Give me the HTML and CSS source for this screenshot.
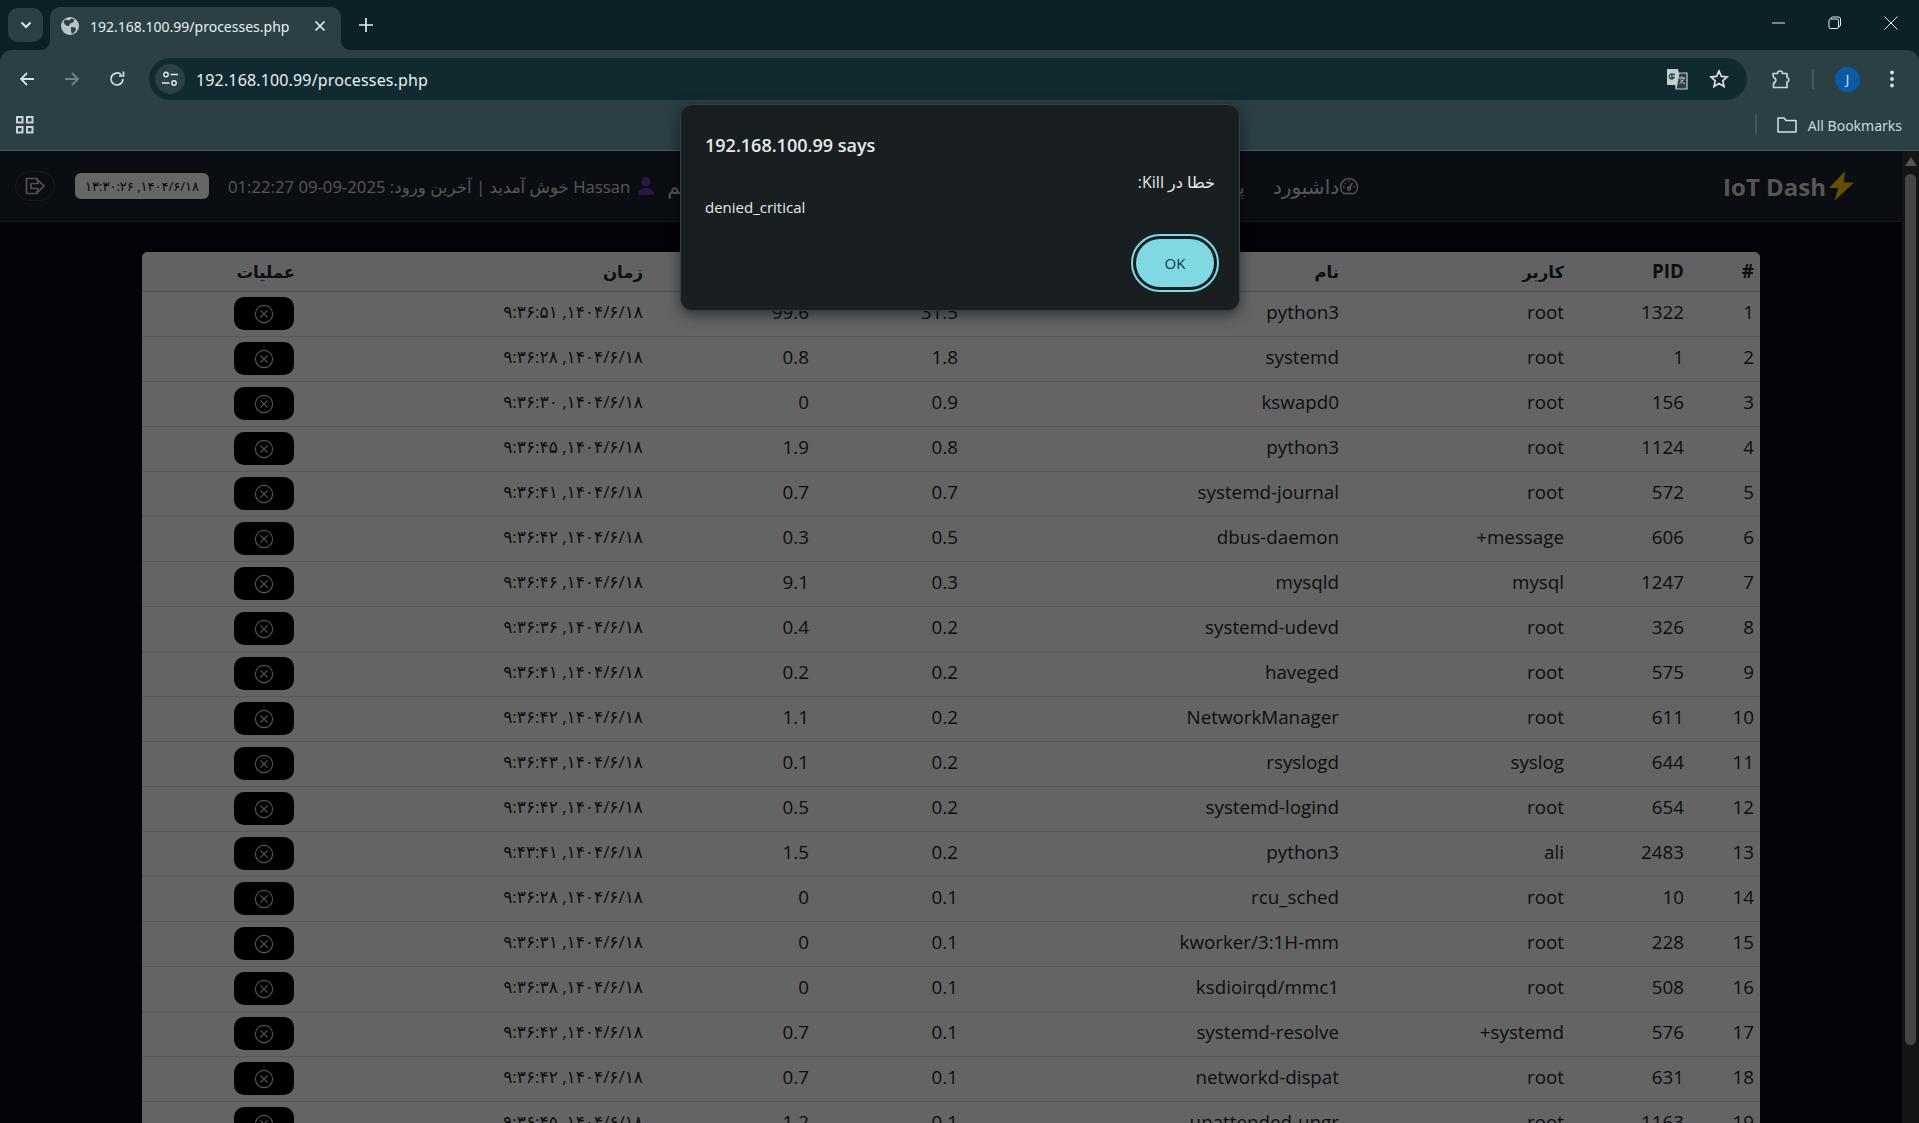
FILE: index.html
```html
<!DOCTYPE html>
<html lang="fa">
<head>
    <meta charset="UTF-8">
    <title>192.168.100.99/processes.php</title>
    <link rel="stylesheet" href="styles.css">
</head>
<body>
    <svg class="defs" width="0" height="0">
        <symbol id="kill" viewBox="0 0 20 20">
            <circle cx="10" cy="10" r="8.6" fill="none" stroke="currentColor" stroke-width="1.1"/>
            <path d="M6.4 6.4l7.2 7.2M13.6 6.4l-7.2 7.2" fill="none" stroke="currentColor" stroke-width="1.2"/>
        </symbol>
    </svg>

    <!-- browser window -->
    <header class="browser">
        <div class="tabstrip">
            <button class="tab-search">
                <svg width="12" height="8" viewBox="0 0 12 8"><path d="M1.5 1.5L6 6l4.500-4.500" fill="none" stroke="#dfe8ea" stroke-width="2"/></svg>
            </button>
            <div class="tab">
                <svg class="globe" width="18" height="18" viewBox="0 0 18 18">
                    <circle cx="9" cy="9" r="9" fill="#b9c6c9"/>
                    <path d="M4 2.500l4 1 2.500-2 3 1-1.500 3-3 1-1 2.500-3-.5-2.500-3zM10 10l4.500.5.500 2.500-3 3.500-1.500-.5-.5-3z" fill="#2a4045"/>
                </svg>
                <span class="tab-title">192.168.100.99/processes.php</span>
                <svg class="tab-close" width="12" height="12" viewBox="0 0 12 12"><path d="M1.500 1.500l9 9M10.500 1.500l-9 9" stroke="#e6eeef" stroke-width="1.700"/></svg>
            </div>
            <svg class="new-tab" width="14" height="14" viewBox="0 0 14 14"><path d="M7 0v14M0 7h14" stroke="#e6eeef" stroke-width="1.700"/></svg>
            <div class="window-controls">
                <svg width="14" height="14" viewBox="0 0 14 14"><path d="M0 7h13" stroke="#e6eeef" stroke-width="1"/></svg>
                <svg width="14" height="14" viewBox="0 0 14 14"><path d="M3 3V2.500A1.500 1.500 0 0 1 4.500 1h6A2 2 0 0 1 12.500 3v6a1.500 1.500 0 0 1-1.500 1.500H11" fill="none" stroke="#e6eeef"/><rect x="1" y="3" width="9.500" height="9.500" rx="1.500" fill="none" stroke="#e6eeef"/></svg>
                <svg width="14" height="14" viewBox="0 0 14 14"><path d="M.5.500l13 13M13.500.500l-13 13" stroke="#e6eeef" stroke-width="1"/></svg>
            </div>
        </div>
        <div class="toolbar">
            <svg class="tool" width="18" height="18" viewBox="0 0 18 18"><path d="M16 9H3M9 3L3 9l6 6" fill="none" stroke="#d5e0e3" stroke-width="1.800"/></svg>
            <svg class="tool" width="18" height="18" viewBox="0 0 18 18"><path d="M2 9h13M9 3l6 6-6 6" fill="none" stroke="#6f8589" stroke-width="1.800"/></svg>
            <svg class="tool" width="18" height="18" viewBox="0 0 18 18"><path d="M15 9a6 6 0 1 1-1.800-4.300M15.500 1.500v4.500H11" fill="none" stroke="#d5e0e3" stroke-width="1.700"/></svg>
            <div class="omnibox">
                <span class="site-chip">
                    <svg width="16" height="16" viewBox="0 0 16 16"><circle cx="4" cy="3.500" r="2.200" fill="none" stroke="#e2ebed" stroke-width="1.400"/><path d="M8.500 3.500H16M0 12h7.500" stroke="#e2ebed" stroke-width="1.400"/><circle cx="12" cy="12" r="2.200" fill="none" stroke="#e2ebed" stroke-width="1.400"/></svg>
                </span>
                <span class="url">192.168.100.99/processes.php</span>
                <svg class="translate" width="22" height="22" viewBox="0 0 22 22">
                    <path d="M1 1h11l1 4h8v16H10l-1-4H1z" fill="#c3ced1"/>
                    <path d="M13 5h8v16H10z" fill="#2a4045" stroke="#c3ced1" stroke-width="1.200"/>
                    <path d="M9 6.500H5.800v3H8a2.500 2.500 0 1 1-.7-3" fill="none" stroke="#2a4045" stroke-width="1.300"/>
                    <path d="M13 10h6M16 8.500V10M18 10c-.7 2.500-2.500 4.500-4.500 5.500M14.500 11.500c1 2 2.500 3.500 4.500 4.500" fill="none" stroke="#c3ced1" stroke-width="1"/>
                </svg>
                <svg class="star" width="20" height="20" viewBox="0 0 20 20"><path d="M10 2l2.400 5.400 5.600.6-4.200 3.800 1.200 5.700-5-2.900-5 2.900 1.200-5.700L2 8l5.600-.6z" fill="none" stroke="#d5e0e3" stroke-width="1.700"/></svg>
            </div>
            <svg class="extension" width="20" height="20" viewBox="0 0 20 20"><path d="M2 4.500h4.500a2.500 2.500 0 0 1 5 0H16v4a2.300 2.300 0 0 1 0 4.500V18.500H2.500v-4.500a2.800 2.800 0 0 0 0-5.500z" fill="none" stroke="#c9d6d9" stroke-width="1.700" stroke-linejoin="round"/></svg>
            <span class="tool-divider"></span>
            <span class="avatar">J</span>
            <svg class="menu-dots" width="6" height="18" viewBox="0 0 6 18"><circle cx="3" cy="2.500" r="1.900" fill="#d5e0e3"/><circle cx="3" cy="9" r="1.900" fill="#d5e0e3"/><circle cx="3" cy="15.500" r="1.900" fill="#d5e0e3"/></svg>
        </div>
        <div class="bookmarks">
            <svg class="apps" width="18" height="18" viewBox="0 0 18 18"><g fill="none" stroke="#c6d2d5" stroke-width="2"><rect x="1" y="1" width="5.500" height="5.500"/><rect x="11" y="1" width="5.500" height="5.500"/><rect x="1" y="11" width="5.500" height="5.500"/><rect x="11" y="11" width="5.500" height="5.500"/></g></svg>
            <span class="tool-divider"></span>
            <svg class="folder" width="20" height="16" viewBox="0 0 20 16"><path d="M1 1h6l2 2.500h10V15H1z" fill="none" stroke="#d5e0e3" stroke-width="1.500" stroke-linejoin="round"/></svg>
            <span class="all-bookmarks">All Bookmarks</span>
        </div>
    </header>

    <div class="page">
        <div class="viewport" dir="rtl">
            <nav class="nav">
                <div class="logo">
                    <svg width="25" height="30" viewBox="0 0 23 30" preserveAspectRatio="none"><path d="M15 0L0 17h8.500L5 30 23 11.500h-9.500z" fill="#ffc107"/></svg>
                    <span>IoT Dash</span>
                </div>
                <div class="nav-links">
                    <a class="nav-link">
                        <svg width="20" height="20" viewBox="0 0 20 20"><g fill="none" stroke="currentColor" stroke-width="1.400"><path d="M4.500 17.500a8.500 8.500 0 1 1 11 0z"/><path d="M10 12l3.500-5"/><circle cx="10" cy="12.500" r="1.500"/><path d="M4 11h1.500M14.500 11H16M6 7l1 1M10 4.500V6"/></g></svg>
                        داشبورد
                    </a>
                    <a class="nav-link">پنل</a>
                    <a class="nav-link nav-last">سیستم</a>
                </div>
                <div class="user-info">
                    <svg class="user-icon" width="16" height="18" viewBox="0 0 16 18"><path d="M8 0a4.500 4.500 0 0 1 0 9.500A4.500 4.500 0 0 1 8 0zM0 18c0-5 3-7 8-7s8 2 8 7z" fill="#6a3ab0"/></svg>
                    <span class="welcome">Hassan خوش آمدید | آخرین ورود: 2025-09-09 01:22:27</span>
                    <span class="clock">۱۴۰۴/۶/۱۸, ۱۳:۳۰:۲۶</span>
                    <button class="logout">
                        <svg width="20" height="18" viewBox="0 0 20 18"><path d="M12 4V1.500H1.500v15H12V14M6 6.500h7V3l6 6-6 6v-3.500H6z" fill="none" stroke="currentColor" stroke-width="1.700" stroke-linejoin="round"/></svg>
                    </button>
                </div>
            </nav>

            <main class="content">
                <div class="table-card">
                    <table class="proc-table">
                        <thead>
                            <tr><th>#</th><th>PID</th><th class="th-fa">کاربر</th><th class="th-fa">نام</th><th class="th-fa">حافظه</th><th>CPU</th><th class="th-fa">زمان</th><th class="th-fa">عملیات</th></tr>
                        </thead>
                        <tbody>
                            <tr><td>1</td><td>1322</td><td>root</td><td>python3</td><td>31.5</td><td>99.6</td><td>۱۴۰۴/۶/۱۸, ۹:۳۶:۵۱</td><td><button class="kill-btn"><svg width="20" height="20"><use href="#kill"/></svg></button></td></tr>
                            <tr><td>2</td><td>1</td><td>root</td><td>systemd</td><td>1.8</td><td>0.8</td><td>۱۴۰۴/۶/۱۸, ۹:۳۶:۲۸</td><td><button class="kill-btn"><svg width="20" height="20"><use href="#kill"/></svg></button></td></tr>
                            <tr><td>3</td><td>156</td><td>root</td><td>kswapd0</td><td>0.9</td><td>0</td><td>۱۴۰۴/۶/۱۸, ۹:۳۶:۳۰</td><td><button class="kill-btn"><svg width="20" height="20"><use href="#kill"/></svg></button></td></tr>
                            <tr><td>4</td><td>1124</td><td>root</td><td>python3</td><td>0.8</td><td>1.9</td><td>۱۴۰۴/۶/۱۸, ۹:۳۶:۴۵</td><td><button class="kill-btn"><svg width="20" height="20"><use href="#kill"/></svg></button></td></tr>
                            <tr><td>5</td><td>572</td><td>root</td><td>systemd-journal</td><td>0.7</td><td>0.7</td><td>۱۴۰۴/۶/۱۸, ۹:۳۶:۴۱</td><td><button class="kill-btn"><svg width="20" height="20"><use href="#kill"/></svg></button></td></tr>
                            <tr><td>6</td><td>606</td><td>message+</td><td>dbus-daemon</td><td>0.5</td><td>0.3</td><td>۱۴۰۴/۶/۱۸, ۹:۳۶:۴۲</td><td><button class="kill-btn"><svg width="20" height="20"><use href="#kill"/></svg></button></td></tr>
                            <tr><td>7</td><td>1247</td><td>mysql</td><td>mysqld</td><td>0.3</td><td>9.1</td><td>۱۴۰۴/۶/۱۸, ۹:۳۶:۴۶</td><td><button class="kill-btn"><svg width="20" height="20"><use href="#kill"/></svg></button></td></tr>
                            <tr><td>8</td><td>326</td><td>root</td><td>systemd-udevd</td><td>0.2</td><td>0.4</td><td>۱۴۰۴/۶/۱۸, ۹:۳۶:۳۶</td><td><button class="kill-btn"><svg width="20" height="20"><use href="#kill"/></svg></button></td></tr>
                            <tr><td>9</td><td>575</td><td>root</td><td>haveged</td><td>0.2</td><td>0.2</td><td>۱۴۰۴/۶/۱۸, ۹:۳۶:۴۱</td><td><button class="kill-btn"><svg width="20" height="20"><use href="#kill"/></svg></button></td></tr>
                            <tr><td>10</td><td>611</td><td>root</td><td>NetworkManager</td><td>0.2</td><td>1.1</td><td>۱۴۰۴/۶/۱۸, ۹:۳۶:۴۲</td><td><button class="kill-btn"><svg width="20" height="20"><use href="#kill"/></svg></button></td></tr>
                            <tr><td>11</td><td>644</td><td>syslog</td><td>rsyslogd</td><td>0.2</td><td>0.1</td><td>۱۴۰۴/۶/۱۸, ۹:۳۶:۴۳</td><td><button class="kill-btn"><svg width="20" height="20"><use href="#kill"/></svg></button></td></tr>
                            <tr><td>12</td><td>654</td><td>root</td><td>systemd-logind</td><td>0.2</td><td>0.5</td><td>۱۴۰۴/۶/۱۸, ۹:۳۶:۴۲</td><td><button class="kill-btn"><svg width="20" height="20"><use href="#kill"/></svg></button></td></tr>
                            <tr><td>13</td><td>2483</td><td>ali</td><td>python3</td><td>0.2</td><td>1.5</td><td>۱۴۰۴/۶/۱۸, ۹:۴۳:۴۱</td><td><button class="kill-btn"><svg width="20" height="20"><use href="#kill"/></svg></button></td></tr>
                            <tr><td>14</td><td>10</td><td>root</td><td>rcu_sched</td><td>0.1</td><td>0</td><td>۱۴۰۴/۶/۱۸, ۹:۳۶:۲۸</td><td><button class="kill-btn"><svg width="20" height="20"><use href="#kill"/></svg></button></td></tr>
                            <tr><td>15</td><td>228</td><td>root</td><td>kworker/3:1H-mm</td><td>0.1</td><td>0</td><td>۱۴۰۴/۶/۱۸, ۹:۳۶:۳۱</td><td><button class="kill-btn"><svg width="20" height="20"><use href="#kill"/></svg></button></td></tr>
                            <tr><td>16</td><td>508</td><td>root</td><td>ksdioirqd/mmc1</td><td>0.1</td><td>0</td><td>۱۴۰۴/۶/۱۸, ۹:۳۶:۳۸</td><td><button class="kill-btn"><svg width="20" height="20"><use href="#kill"/></svg></button></td></tr>
                            <tr><td>17</td><td>576</td><td>systemd+</td><td>systemd-resolve</td><td>0.1</td><td>0.7</td><td>۱۴۰۴/۶/۱۸, ۹:۳۶:۴۲</td><td><button class="kill-btn"><svg width="20" height="20"><use href="#kill"/></svg></button></td></tr>
                            <tr><td>18</td><td>631</td><td>root</td><td>networkd-dispat</td><td>0.1</td><td>0.7</td><td>۱۴۰۴/۶/۱۸, ۹:۳۶:۴۲</td><td><button class="kill-btn"><svg width="20" height="20"><use href="#kill"/></svg></button></td></tr>
                            <tr><td>19</td><td>1163</td><td>root</td><td>unattended-upgr</td><td>0.1</td><td>1.2</td><td>۱۴۰۴/۶/۱۸, ۹:۳۶:۴۵</td><td><button class="kill-btn"><svg width="20" height="20"><use href="#kill"/></svg></button></td></tr>
                        </tbody>
                    </table>
                </div>
            </main>
            <div class="dim"></div>
        </div>
        <div class="scrollbar">
            <span class="scroll-up"></span>
            <span class="scroll-thumb"></span>
        </div>
    </div>

    <!-- alert -->
    <div class="alert-box">
        <h2 class="alert-title">192.168.100.99 says</h2>
        <p class="alert-line alert-message" dir="rtl">خطا در Kill:</p>
        <p class="alert-line alert-detail">denied_critical</p>
        <div class="alert-actions"><button class="alert-ok">OK</button></div>
    </div>
</body>
</html>
```

FILE: styles.css
```css
* {
    box-sizing: border-box;
}
html, body {
    margin: 0;
    height: 100%;
    overflow: hidden;
}
body {
    position: relative;
    display: flex;
    flex-direction: column;
    font-family: "Open Sans", "DejaVu Sans", sans-serif;
    background: #080c19;
}
.defs {
    position: absolute;
}
button {
    font-family: inherit;
    border: none;
    padding: 0;
}
svg {
    display: block;
    flex: none;
}

/* browser window */
.browser {
    height: 151px;
    flex: none;
    background: #0b2127;
    border-bottom: 1px solid #4a5a5e;
}
.tabstrip {
    height: 50px;
    display: flex;
    align-items: center;
    padding-left: 8px;
}
.tab-search {
    width: 35px;
    height: 34px;
    margin-top: -1px;
    border-radius: 10px;
    background: #2a4045;
    display: flex;
    align-items: center;
    justify-content: center;
}
.tab {
    position: relative;
    width: 291px;
    height: 43px;
    margin: 7px 0 0 7px;
    padding: 0 15px 5px 11px;
    display: flex;
    align-items: center;
    background: #2a4045;
    border-radius: 10px 10px 0 0;
}
.tab::before, .tab::after {
    content: "";
    position: absolute;
    bottom: 0;
    width: 10px;
    height: 10px;
}
.tab::before {
    left: -10px;
    background: radial-gradient(circle at 0 0, transparent 10px, #2a4045 10.500px);
}
.tab::after {
    right: -10px;
    background: radial-gradient(circle at 100% 0, transparent 10px, #2a4045 10.500px);
}
.tab-title {
    flex: 1;
    margin-left: 11px;
    font-family: "Noto Sans", sans-serif;
    font-size: 14px;
    color: #e6eeef;
}
.new-tab {
    margin-left: 18px;
}
.window-controls {
    margin-left: auto;
    display: flex;
    gap: 42px;
    padding-right: 21px;
    margin-top: -5px;
}
.toolbar {
    height: 58px;
    display: flex;
    align-items: center;
    padding: 0 22px 0 18px;
    background: #2a4045;
    border-radius: 12px 12px 0 0;
}
.tool {
    margin-right: 27px;
}
.tool:nth-child(3) {
    margin-right: 23px;
}
.omnibox {
    width: 1598px;
    height: 42px;
    display: flex;
    align-items: center;
    padding: 0 18px 0 6px;
    background: #112a30;
    border-radius: 21px;
}
.site-chip {
    width: 30px;
    height: 30px;
    border-radius: 50%;
    background: #2a4045;
    display: flex;
    align-items: center;
    justify-content: center;
}
.url {
    flex: 1;
    margin-left: 11px;
    padding-top: 1px;
    font-family: "Noto Sans", sans-serif;
    font-size: 16px;
    letter-spacing: 0.15px;
    color: #e6f0f2;
}
.star {
    margin-left: 21px;
}
.extension {
    margin-left: 24px;
}
.tool-divider {
    width: 2px;
    height: 20px;
    background: #42575c;
    margin-left: 21px;
}
.avatar {
    width: 25px;
    height: 25px;
    margin-left: 21px;
    border-radius: 50%;
    background: #0b5aa8;
    color: #e8f0f8;
    font-size: 13px;
    display: flex;
    align-items: center;
    justify-content: center;
}
.menu-dots {
    margin-left: 29px;
}
.bookmarks {
    height: 42px;
    display: flex;
    align-items: center;
    padding: 0 17px 8px 16px;
    background: #2a4045;
}
.bookmarks .tool-divider {
    margin-left: auto;
}
.folder {
    margin-left: 20px;
}
.all-bookmarks {
    margin-left: 11px;
    font-family: "Noto Sans", sans-serif;
    font-size: 14px;
    color: #cbd8db;
}

/* page under the alert */
.page {
    flex: 1;
    min-height: 0;
    display: flex;
}
.viewport {
    position: relative;
    flex: 1;
    min-width: 0;
    overflow: hidden;
}
.dim {
    position: absolute;
    inset: 0;
    background: rgba(0, 0, 0, 0.6);
}
.scrollbar {
    width: 17px;
    flex: none;
    background: #141414;
    padding: 6px 3px 0;
}
.scroll-up {
    display: block;
    width: 0;
    margin: 0 auto;
    border: 6px solid transparent;
    border-top: none;
    border-bottom: 9px solid #555;
}
.scroll-thumb {
    display: block;
    height: 871px;
    margin-top: 8px;
    background: #444;
    border-radius: 6px;
}

.nav {
    height: 71px;
    display: flex;
    align-items: center;
    padding: 0 48px 0 15px;
    background: #19212d;
    border-bottom: 1px solid #333a46;
    color: #d8d8d8;
}
.logo {
    display: flex;
    align-items: center;
    gap: 3px;
    font-size: 24px;
    font-weight: 700;
    color: #d8d8d8;
}
.nav-links {
    flex: 1;
    display: flex;
    align-items: center;
    gap: 28px;
    margin: 0 364px 0 13px;
}
.nav-link {
    display: flex;
    align-items: center;
    font-size: 20px;
    white-space: nowrap;
}
.nav-last {
    margin-right: auto;
}
.user-info {
    display: flex;
    align-items: center;
}
.user-icon {
    margin-left: 8px;
}
.welcome {
    padding-top: 1px;
    font-size: 16.7px;
    white-space: nowrap;
}
.clock {
    width: 134px;
    height: 26px;
    margin-right: 19px;
    border-radius: 6px;
    background: #fff;
    color: #111;
    font-size: 13px;
    display: flex;
    align-items: center;
    justify-content: center;
    white-space: nowrap;
}
.logout {
    width: 40px;
    height: 30px;
    margin-right: 20px;
    border: 1px solid #444;
    border-radius: 15px;
    background: transparent;
    color: #ccc;
    display: flex;
    align-items: center;
    justify-content: center;
}

.content {
    padding: 30px 142px 0;
}
.table-card {
    background: #fbfbfb;
    border-radius: 6px 6px 0 0;
    overflow: hidden;
}
.proc-table {
    width: 100%;
    table-layout: fixed;
    border-collapse: collapse;
    color: #212529;
    font-size: 18.8px;
}
.proc-table th, .proc-table td {
    text-align: right;
    padding: 0 5px 0 6px;
    white-space: nowrap;
}
.proc-table th {
    height: 39px;
    background: #f5f6f6;
    font-weight: 700;
    border-bottom: 1px solid #c0c0c0;
}
.proc-table .th-fa {
    font-size: 16.5px;
}
.proc-table td {
    height: 45px;
    padding-bottom: 4px;
    border-bottom: 1px solid #dcdfe2;
}
.proc-table th:nth-child(1) { width: 71px; padding-right: 6px; }
.proc-table td:nth-child(1) { padding-right: 6px; }
.proc-table th:nth-child(2) { width: 120px; }
.proc-table th:nth-child(3) { width: 225px; }
.proc-table th:nth-child(4) { width: 381px; }
.proc-table th:nth-child(5) { width: 149px; }
.proc-table th:nth-child(6) { width: 166px; }
.proc-table th:nth-child(7) { width: 348px; }
.proc-table td:nth-child(7) {
    font-size: 17px;
}
.proc-table td:nth-child(8) {
    padding: 0 6px;
}
.kill-btn {
    width: 60px;
    height: 33px;
    border-radius: 10px;
    background: #000;
    color: #d8d8d8;
    display: flex;
    align-items: center;
    justify-content: center;
}

/* alert */
.alert-box {
    position: absolute;
    left: 680px;
    top: 104px;
    width: 560px;
    height: 207px;
    padding: 28px 24px 0;
    background: #191e21;
    border: 1px solid #3b3f42;
    border-radius: 12px;
    box-shadow: 0 4px 14px rgba(0, 0, 0, 0.5);
    color: #e6eaec;
}
.alert-title {
    margin: 0;
    font-size: 18px;
    font-weight: 600;
    line-height: 25px;
}
.alert-line {
    margin: 13px 0 0;
    font-size: 15px;
    line-height: 22px;
}
.alert-message {
    font-size: 16px;
}
.alert-detail {
    margin-top: 3px;
}
.alert-actions {
    display: flex;
    justify-content: flex-end;
    margin: 16px -4px 0 0;
}
.alert-ok {
    width: 78px;
    height: 48px;
    margin: 5px;
    border-radius: 24px;
    background: #80d8e2;
    color: #0b3a42;
    font-size: 15px;
    outline: 2px solid #80d8e2;
    outline-offset: 3px;
}
```
